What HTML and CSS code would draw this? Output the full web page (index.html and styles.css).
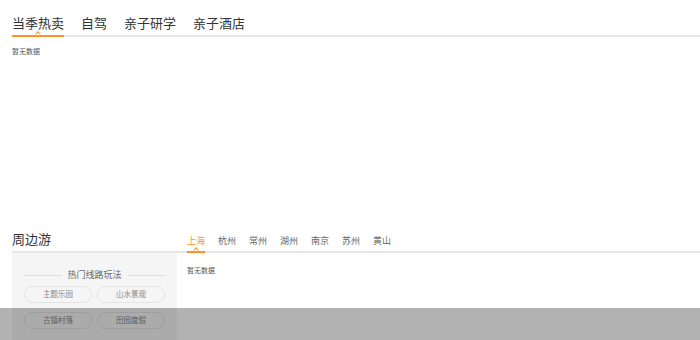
FILE: index.html
```html
<!DOCTYPE html>
<html lang="zh-CN">
<head>
    <meta charset="UTF-8">
    <meta name="viewport" content="width=device-width, initial-scale=1.0">
    <title>当季热卖</title>
    <link rel="stylesheet" href="styles.css">
</head>
<body>
    <div class="hot">
        <div class="tabs">
            <a href="javascript:;" class="tab active">当季热卖</a>
            <a href="javascript:;" class="tab">自驾</a>
            <a href="javascript:;" class="tab">亲子研学</a>
            <a href="javascript:;" class="tab">亲子酒店</a>
        </div>
        <p class="empty">暂无数据</p>
    </div>

    <div class="around">
        <div class="side">
            <h2 class="side-title">周边游</h2>
            <div class="panel">
                <h3 class="panel-title">热门线路玩法</h3>
                <ul class="pills">
                    <li>主题乐园</li>
                    <li>山水景观</li>
                    <li>古镇村落</li>
                    <li>田园度假</li>
                </ul>
            </div>
        </div>
        <div class="cities">
            <div class="city-tabs">
                <a href="javascript:;" class="city active">上海</a>
                <a href="javascript:;" class="city">杭州</a>
                <a href="javascript:;" class="city">常州</a>
                <a href="javascript:;" class="city">湖州</a>
                <a href="javascript:;" class="city">南京</a>
                <a href="javascript:;" class="city">苏州</a>
                <a href="javascript:;" class="city">黄山</a>
            </div>
            <p class="empty">暂无数据</p>
        </div>
    </div>

    <div class="mask"></div>
</body>
</html>
```

FILE: styles.css
```css
*{
    margin: 0;
    padding: 0;
    box-sizing: border-box;
}
ul,ol{
    list-style: none;
}
a{
    text-decoration: none;
}
body{
    background: #fff;
    font-family: "Liberation Sans", "Noto Sans CJK SC", sans-serif;
    color: #333;
}
.hot{
    height: 228px;
    padding: 15px 0 0 12px;
}
.tabs{
    display: flex;
    gap: 17px;
    border-bottom: 2px solid #e6e6e6;
}
.tab{
    position: relative;
    font-size: 13px;
    line-height: 18px;
    padding-bottom: 2px;
    color: #333;
}
.active::after{
    content: "";
    position: absolute;
    left: 0;
    right: 0;
    bottom: -2px;
    height: 2px;
    background: #ff9226;
}
.active::before{
    content: "";
    position: absolute;
    left: 50%;
    bottom: -1px;
    width: 3px;
    height: 3px;
    margin-left: -2px;
    border-top: 1px solid #ff9226;
    border-left: 1px solid #ff9226;
    background: #fff;
    transform: rotate(45deg);
}
.empty{
    font-size: 7px;
    line-height: 10px;
    color: #555;
    margin-top: 10px;
}
.around{
    display: flex;
}
.side{
    width: 165px;
    margin-left: 12px;
}
.side-title{
    font-size: 13px;
    font-weight: normal;
    line-height: 23px;
    border-bottom: 2px solid #e6e6e6;
}
.panel{
    background: #f5f5f5;
    padding: 15px 12px 20px;
}
.panel-title{
    display: flex;
    align-items: center;
    gap: 6px;
    font-size: 9px;
    font-weight: normal;
    line-height: 14px;
    color: #666;
}
.panel-title::before,
.panel-title::after{
    content: "";
    flex: 1;
    height: 1px;
    background: #dedede;
}
.pills{
    display: grid;
    grid-template-columns: 1fr 1fr;
    column-gap: 5px;
    row-gap: 9px;
    margin-top: 4px;
}
.pills li{
    height: 17px;
    line-height: 15px;
    border: 1px solid #e2e2e2;
    border-radius: 9px;
    text-align: center;
    font-size: 7.5px;
    color: #888;
}
.cities{
    flex: 1;
}
.city-tabs{
    display: flex;
    align-items: flex-end;
    height: 25px;
    gap: 13px;
    padding-left: 10px;
    border-bottom: 2px solid #e6e6e6;
}
.city{
    position: relative;
    font-size: 9px;
    line-height: 12px;
    padding-bottom: 4px;
    color: #666;
}
.city.active{
    color: #ff9226;
}
.cities .empty{
    margin-top: 13px;
    padding-left: 10px;
}
.mask{
    position: fixed;
    left: 0;
    right: 0;
    bottom: 0;
    height: 32px;
    background: rgba(0,0,0,0.3);
}
```
